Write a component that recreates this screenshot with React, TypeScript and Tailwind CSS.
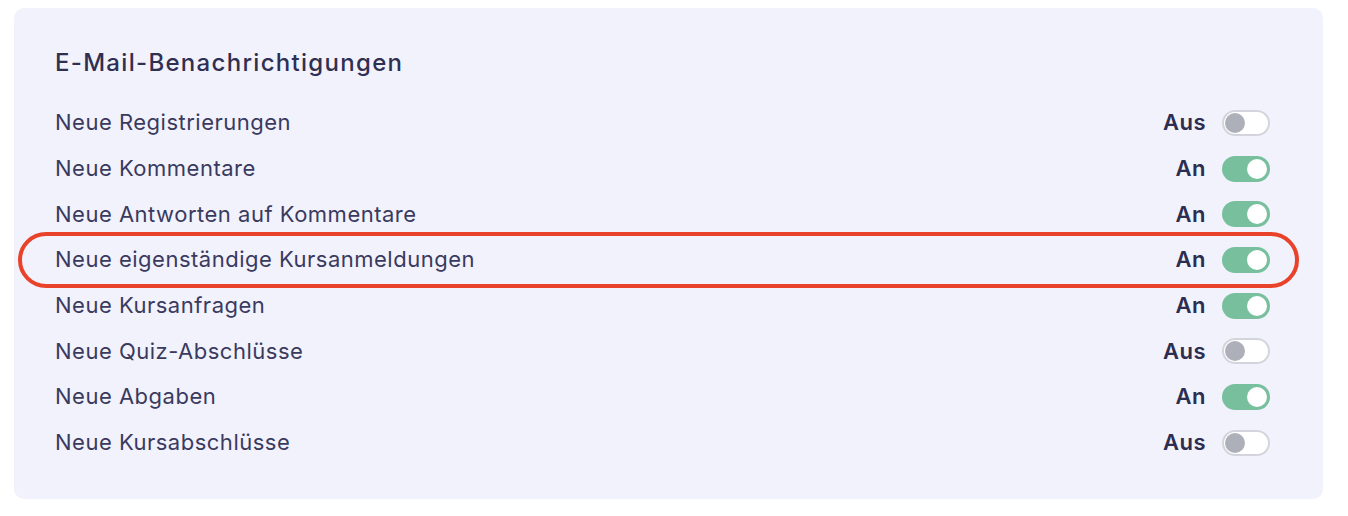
const rows: { label: string; on: boolean; marked?: boolean }[] = [
  { label: "Neue Registrierungen", on: false },
  { label: "Neue Kommentare", on: true },
  { label: "Neue Antworten auf Kommentare", on: true },
  { label: "Neue eigenständige Kursanmeldungen", on: true, marked: true },
  { label: "Neue Kursanfragen", on: true },
  { label: "Neue Quiz-Abschlüsse", on: false },
  { label: "Neue Abgaben", on: true },
  { label: "Neue Kursabschlüsse", on: false },
];

const Toggle = ({ on }: { on: boolean }) => {
  return on ? (
    <div className="flex h-[26px] w-[48px] items-center justify-end rounded-full bg-[#78bf9d] px-[3px]">
      <div className="h-[20px] w-[20px] rounded-full bg-white" />
    </div>
  ) : (
    <div className="flex h-[26px] w-[48px] items-center justify-start rounded-full border-2 border-[#d4d5dc] bg-white px-[1px]">
      <div className="h-[20px] w-[20px] rounded-full bg-[#adb0b8]" />
    </div>
  );
};

export default function App() {
  return (
    <div className="h-[516px] w-[1348px] bg-white pl-[14px] pt-[8px] font-['Inter',sans-serif]">
      <div className="w-[1309px] rounded-[10px] bg-[#f2f2fd] pb-[33px] pl-[41px] pr-[53px] pt-[39px]">
        <h2 className="h-[32px] text-[24px] font-medium leading-[32px] tracking-[1.3px] text-[#2f2f52]">
          E-Mail-Benachrichtigungen
        </h2>
        <div className="mt-[21px] flex flex-col">
          {rows.map((r) => (
            <div key={r.label} className="relative flex h-[45.7px] items-center justify-between">
              {r.marked && (
                <div className="absolute -bottom-[5px] -left-[37px] -right-[29px] -top-[5px] rounded-full border-[4.5px] border-[#e8432a]" />
              )}
              <span className="text-[22px] tracking-[0.5px] text-[#3a3a5e]">{r.label}</span>
              <div className="flex items-center gap-[16px]">
                <span className="text-[22px] font-semibold tracking-[0.5px] text-[#2d2d50]">{r.on ? "An" : "Aus"}</span>
                <Toggle on={r.on} />
              </div>
            </div>
          ))}
        </div>
      </div>
    </div>
  );
}
